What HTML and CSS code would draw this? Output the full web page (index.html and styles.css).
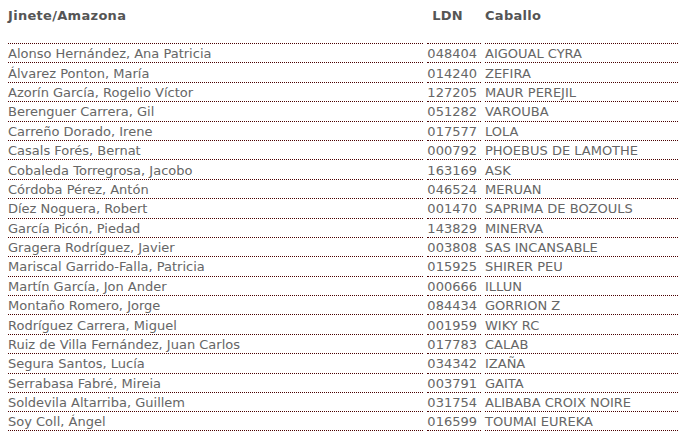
FILE: index.html
```html
<!DOCTYPE html>
<html>
<head>
<meta charset="utf-8">
<link rel="stylesheet" href="styles.css">
</head>
<body>
<table class="list">
<thead>
<tr><th class="name">Jinete/Amazona</th><th class="ldn">LDN</th><th class="horse">Caballo</th></tr>
</thead>
<tbody>
<tr><td class="name">Alonso Hernández, Ana Patricia</td><td class="ldn">048404</td><td class="horse">AIGOUAL CYRA</td></tr>
<tr><td class="name">Álvarez Ponton, María</td><td class="ldn">014240</td><td class="horse">ZEFIRA</td></tr>
<tr><td class="name">Azorín García, Rogelio Víctor</td><td class="ldn">127205</td><td class="horse">MAUR PEREJIL</td></tr>
<tr><td class="name">Berenguer Carrera, Gil</td><td class="ldn">051282</td><td class="horse">VAROUBA</td></tr>
<tr><td class="name">Carreño Dorado, Irene</td><td class="ldn">017577</td><td class="horse">LOLA</td></tr>
<tr><td class="name">Casals Forés, Bernat</td><td class="ldn">000792</td><td class="horse">PHOEBUS DE LAMOTHE</td></tr>
<tr><td class="name">Cobaleda Torregrosa, Jacobo</td><td class="ldn">163169</td><td class="horse">ASK</td></tr>
<tr><td class="name">Córdoba Pérez, Antón</td><td class="ldn">046524</td><td class="horse">MERUAN</td></tr>
<tr><td class="name">Díez Noguera, Robert</td><td class="ldn">001470</td><td class="horse">SAPRIMA DE BOZOULS</td></tr>
<tr><td class="name">García Picón, Piedad</td><td class="ldn">143829</td><td class="horse">MINERVA</td></tr>
<tr><td class="name">Gragera Rodríguez, Javier</td><td class="ldn">003808</td><td class="horse">SAS INCANSABLE</td></tr>
<tr><td class="name">Mariscal Garrido-Falla, Patricia</td><td class="ldn">015925</td><td class="horse">SHIRER PEU</td></tr>
<tr><td class="name">Martín García, Jon Ander</td><td class="ldn">000666</td><td class="horse">ILLUN</td></tr>
<tr><td class="name">Montaño Romero, Jorge</td><td class="ldn">084434</td><td class="horse">GORRION Z</td></tr>
<tr><td class="name">Rodríguez Carrera, Miguel</td><td class="ldn">001959</td><td class="horse">WIKY RC</td></tr>
<tr><td class="name">Ruiz de Villa Fernández, Juan Carlos</td><td class="ldn">017783</td><td class="horse">CALAB</td></tr>
<tr><td class="name">Segura Santos, Lucía</td><td class="ldn">034342</td><td class="horse">IZAÑA</td></tr>
<tr><td class="name">Serrabasa Fabré, Mireia</td><td class="ldn">003791</td><td class="horse">GAITA</td></tr>
<tr><td class="name">Soldevila Altarriba, Guillem</td><td class="ldn">031754</td><td class="horse">ALIBABA CROIX NOIRE</td></tr>
<tr><td class="name">Soy Coll, Ángel</td><td class="ldn">016599</td><td class="horse">TOUMAI EUREKA</td></tr>
</tbody>
</table>
</body>
</html>
```
FILE: styles.css
```css
html, body {
  margin: 0;
  padding: 0;
  background: #fff;
  overflow: hidden;
}
body {
  padding: 0 0 0 4px;
  font-family: "DejaVu Sans", Verdana, sans-serif;
  font-size: 13px;
  color: #666;
  width: 720px;
}
.list {
  border-collapse: separate;
  border-spacing: 4px 0;
  width: 720px;
  table-layout: fixed;
}
.list th {
  font-weight: bold;
  color: #555;
  height: 43px;
  vertical-align: top;
  padding: 8px 0 0 0;
  box-sizing: border-box;
  text-align: left;
  font-size: 13px;
  letter-spacing: 0.3px;
}
.list th.ldn {
  text-align: right;
  padding-right: 18px;
}
.list td {
  border-top: 1px dotted #4a0000;
  height: 19.4px;
  padding: 1px 0 0 0;
  box-sizing: border-box;
  line-height: 17px;
  white-space: nowrap;
}
.list tbody tr:last-child td {
  border-bottom: 1px dotted #4a0000;
}
.name { width: 415px; }
.ldn { width: 54px; text-align: right; }
.list td.ldn { padding-right: 4px; }
.horse { width: auto; }
```
